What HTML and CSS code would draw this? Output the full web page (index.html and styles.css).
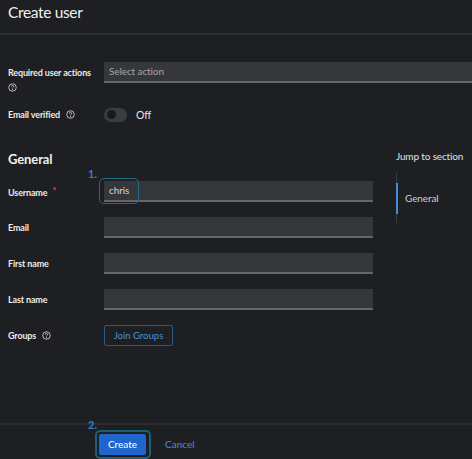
FILE: index.html
```html
<!DOCTYPE html>
<html lang="en">
<head>
  <meta charset="UTF-8">
  <meta name="viewport" content="width=device-width, initial-scale=1.0">
  <title>Create user</title>
  <link rel="stylesheet" href="styles.css">
</head>
<body>
  <header class="page-header">
    <h1>Create user</h1>
  </header>

  <section class="top-form">
    <div class="form-row">
      <div class="label label-stack">
        <span>Required user actions</span>
        <span class="help">
          <svg viewBox="0 0 10 10" width="9" height="9"><circle cx="5" cy="5" r="4.2" fill="none" stroke="currentColor" stroke-width="1"/><path d="M3.7 4a1.3 1.3 0 1 1 1.9 1.1c-.4.2-.6.5-.6.9" fill="none" stroke="currentColor" stroke-width="1"/><circle cx="5" cy="7.4" r=".6" fill="currentColor"/></svg>
        </span>
      </div>
      <div class="select">Select action</div>
    </div>
    <div class="form-row row-switch">
      <div class="label">
        Email verified
        <span class="help">
          <svg viewBox="0 0 10 10" width="9" height="9"><circle cx="5" cy="5" r="4.2" fill="none" stroke="currentColor" stroke-width="1"/><path d="M3.7 4a1.3 1.3 0 1 1 1.9 1.1c-.4.2-.6.5-.6.9" fill="none" stroke="currentColor" stroke-width="1"/><circle cx="5" cy="7.4" r=".6" fill="currentColor"/></svg>
        </span>
      </div>
      <div class="switch">
        <span class="track"><span class="knob"></span></span>
        <span class="switch-text">Off</span>
      </div>
    </div>
  </section>

  <div class="content">
    <form class="general">
      <h2>General</h2>
      <div class="fields">
        <label class="label">Username <span class="required">*</span></label>
        <div class="field">
          <div class="input">chris</div>
          <span class="mark mark-one">1.</span>
          <span class="ring ring-one"></span>
        </div>

        <label class="label">Email</label>
        <div class="field"><div class="input"></div></div>

        <label class="label">First name</label>
        <div class="field"><div class="input"></div></div>

        <label class="label">Last name</label>
        <div class="field"><div class="input"></div></div>

        <div class="label">
          Groups
          <span class="help">
            <svg viewBox="0 0 10 10" width="9" height="9"><circle cx="5" cy="5" r="4.2" fill="none" stroke="currentColor" stroke-width="1"/><path d="M3.7 4a1.3 1.3 0 1 1 1.9 1.1c-.4.2-.6.5-.6.9" fill="none" stroke="currentColor" stroke-width="1"/><circle cx="5" cy="7.4" r=".6" fill="currentColor"/></svg>
          </span>
        </div>
        <div class="field"><a class="btn-secondary" href="javascript:void(0);">Join Groups</a></div>
      </div>
    </form>

    <aside class="jump">
      <div class="jump-title">Jump to section</div>
      <ul class="jump-list">
        <li class="jump-item active">General</li>
      </ul>
    </aside>
  </div>

  <footer class="actions">
    <span class="mark mark-two">2.</span>
    <div class="create-wrap">
      <a class="btn-primary" href="javascript:void(0);">Create</a>
      <span class="ring ring-two"></span>
    </div>
    <a class="btn-link" href="javascript:void(0);">Cancel</a>
  </footer>
</body>
</html>
```

FILE: styles.css
```css
/* 通用样式 */
* {
  margin: 0;
  padding: 0;
  box-sizing: border-box;
}
a {
  color: inherit;
  text-decoration: none;
}
ul {
  list-style: none;
}
body {
  width: 472px;
  height: 459px;
  overflow: hidden;
  font-family: Lato, "Noto Sans", sans-serif;
  color: #e6e6e6;
  background: #1e1f23;
}

/* 页头 */
.page-header {
  height: 35px;
  padding: 2px 8px 0;
  border-bottom: 2px solid #2c2d31;
}
.page-header h1 {
  font-size: 15.5px;
  font-weight: 400;
  line-height: 20px;
  letter-spacing: -0.35px;
  color: #f0f0f0;
}

/* 标签 */
.label {
  font-size: 9px;
  font-weight: 700;
  line-height: 15px;
  letter-spacing: -0.15px;
  color: #ececec;
  white-space: nowrap;
}
.label-stack {
  display: flex;
  flex-direction: column;
  align-items: flex-start;
  padding-top: 3px;
}
.label-stack .help {
  margin: 3px 0 0 0;
}
.help {
  display: inline-flex;
  margin-left: 4px;
  vertical-align: -1px;
  color: #c8c8c8;
}
.required {
  margin-left: 3px;
  font-size: 9px;
  vertical-align: 2px;
  color: #e0473b;
}

/* 顶部表单 */
.top-form {
  padding: 27px 0 0 8px;
}
.form-row {
  display: grid;
  grid-template-columns: 96px 1fr;
  align-items: start;
}
.row-switch {
  margin-top: 15px;
  align-items: center;
}
.select {
  height: 21px;
  padding-left: 5px;
  font-size: 10px;
  line-height: 19px;
  letter-spacing: -0.1px;
  color: #a3a4a7;
  background: #36373b;
  border-bottom: 2px solid #64666a;
}
.switch {
  display: flex;
  align-items: center;
  height: 14px;
}
.track {
  display: flex;
  align-items: center;
  width: 23px;
  height: 14px;
  padding-left: 3px;
  border-radius: 7px;
  background: #3b3c40;
}
.knob {
  width: 9px;
  height: 9px;
  border-radius: 50%;
  background: #18191b;
}
.switch-text {
  margin-left: 9px;
  font-size: 10.5px;
  color: #e6e6e6;
}

/* General 区域 */
.content {
  display: flex;
  margin-top: 28px;
}
.general {
  flex-shrink: 0;
  width: 373px;
  padding-left: 8px;
}
.general h2 {
  font-size: 13px;
  font-weight: 700;
  line-height: 18px;
  letter-spacing: -0.1px;
  color: #f0f0f0;
}
.fields {
  display: grid;
  grid-template-columns: 96px 1fr;
  row-gap: 15px;
  align-items: center;
  margin-top: 13px;
}
.field {
  position: relative;
  display: flex;
  height: 21px;
}
.input {
  flex: 1;
  height: 21px;
  padding-left: 5px;
  font-size: 10px;
  line-height: 19px;
  letter-spacing: -0.1px;
  color: #d6d6d6;
  background: #36373b;
  border-bottom: 2px solid #64666a;
}
.btn-secondary {
  display: block;
  width: 69px;
  height: 21px;
  font-size: 9.5px;
  line-height: 19px;
  text-align: center;
  color: #4e8fd6;
  border: 1px solid #2a5a82;
  border-radius: 2px;
}

/* 右侧跳转 */
.jump {
  flex-shrink: 0;
  margin-left: 23px;
  white-space: nowrap;
}
.jump-title {
  margin-top: -2px;
  font-size: 10px;
  line-height: 16px;
  letter-spacing: -0.15px;
  color: #e0e0e0;
}
.jump-list {
  margin-top: 9px;
  padding: 10px 0 9px;
  border-left: 1px solid #3a3c40;
}
.jump-item {
  height: 31px;
  margin-left: -1px;
  padding-left: 7px;
  font-size: 10px;
  line-height: 31px;
  letter-spacing: -0.1px;
  color: #cfcfcf;
}
.jump-item.active {
  border-left: 2px solid #3f8ee2;
}

/* 底部按钮 */
.actions {
  position: relative;
  display: flex;
  align-items: flex-start;
  margin-top: 77px;
  height: 37px;
  padding: 9px 0 0 99px;
  border-top: 2px solid #2c2d31;
  border-bottom: 1px solid #2c2d31;
}
.create-wrap {
  position: relative;
}
.btn-primary {
  display: block;
  width: 47px;
  height: 21px;
  font-size: 10px;
  line-height: 21px;
  text-align: center;
  color: #fff;
  background: #1f66cc;
  border-radius: 2px;
}
.btn-link {
  margin-left: 19px;
  font-size: 10px;
  line-height: 21px;
  color: #4a8cd6;
}

/* 标注 */
.mark {
  position: absolute;
  font-size: 11px;
  font-weight: 700;
  line-height: 10px;
  color: #3c7bd0;
}
.ring {
  position: absolute;
  border: 1.5px solid #1e6a8b;
  border-radius: 5px;
}
.mark-one {
  top: -12px;
  left: -16px;
}
.ring-one {
  top: -3px;
  left: -5px;
  width: 40px;
  height: 26px;
}
.mark-two {
  top: -5px;
  left: 88px;
}
.ring-two {
  top: -4px;
  left: -4px;
  width: 56px;
  height: 29px;
  border-width: 2px;
  border-color: #1d5e76;
}
```
